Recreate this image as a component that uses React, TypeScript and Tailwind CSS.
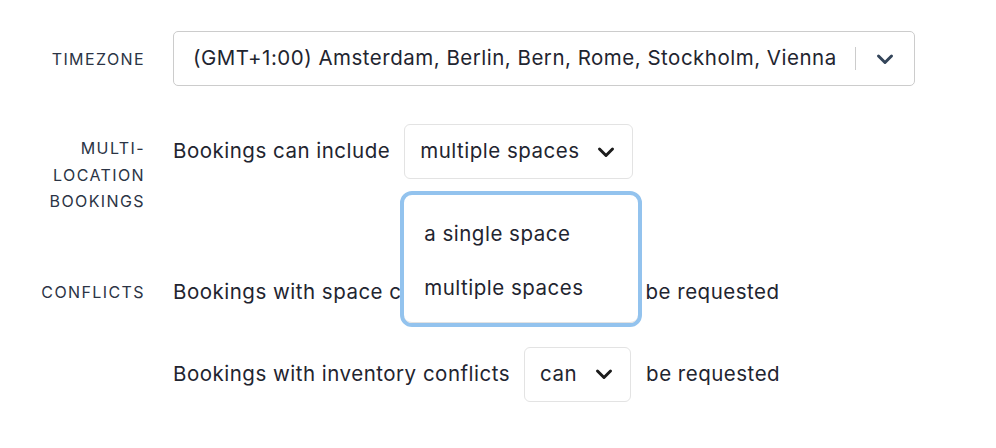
import React from "react";

function Chevron({ className }: { className?: string }) {
  return (
    <svg width="18" height="12" viewBox="0 0 18 12" className={className} fill="none">
      <polyline points="2.5,3 9,9.5 15.5,3" stroke="currentColor" strokeWidth="3" strokeLinecap="round" strokeLinejoin="round" />
    </svg>
  );
}

function Select({ value, width }: { value: string; width: string }) {
  return (
    <div className={`flex h-[55px] items-center justify-between rounded-md border border-[#e3e3e3] bg-white pl-[15px] pr-[17px] ${width}`}>
      <span>{value}</span>
      <Chevron className="text-[#1c1c1c]" />
    </div>
  );
}

export default function App() {
  return (
    <div className="min-h-[448px] w-[996px] bg-white text-[20.5px] tracking-[0.5px] text-[#1f2530]" style={{ fontFamily: "Inter, 'Noto Sans', sans-serif" }}>
      <div className="flex flex-col pt-[31px]">
        {/* timezone */}
        <div className="flex items-center">
          <div className="w-[145px] text-right text-[16px] tracking-[1.4px] text-[#2b3445]">TIMEZONE</div>
          <div className="ml-[28px] flex h-[55px] w-[742px] items-center rounded-[5px] border border-[#cccccc] pl-[19px]">
            <span className="flex-1">(GMT+1:00) Amsterdam, Berlin, Bern, Rome, Stockholm, Vienna</span>
            <div className="h-[23px] w-px bg-[#cccccc]" />
            <div className="flex w-[58px] justify-center">
              <Chevron className="text-[#34455a]" />
            </div>
          </div>
        </div>

        {/* multi-location */}
        <div className="mt-[38px] flex items-start">
          <div className="w-[145px] pt-[11px] text-right text-[16px] leading-[26.5px] tracking-[1.4px] text-[#2b3445]">
            MULTI-
            <br />
            LOCATION
            <br />
            BOOKINGS
          </div>
          <div className="ml-[28px] flex items-center">
            <span>Bookings can include</span>
            <div className="relative ml-[14px]">
              <Select value="multiple spaces" width="w-[229px]" />
              <div className="absolute left-[-4px] top-[67px] z-10 w-[242px] rounded-[12px] border-4 border-[#93c3ee] bg-white">
                <div className="rounded-[8px] border-b border-[#e2e2e2] pb-[7px] pt-[12px]">
                  <div className="flex h-[54px] items-center pl-[20px]">a single space</div>
                  <div className="flex h-[54px] items-center pl-[20px]">multiple spaces</div>
                </div>
              </div>
            </div>
          </div>
        </div>

        {/* conflicts */}
        <div className="mt-[50px] flex items-center">
          <div className="w-[145px] text-right text-[16px] tracking-[1.4px] text-[#2b3445]">CONFLICTS</div>
          <div className="ml-[28px] flex items-center">
            <span>Bookings with space conflicts</span>
            <div className="ml-[15px]">
              <Select value="cannot" width="w-[139px]" />
            </div>
            <span className="ml-[15px]">be requested</span>
          </div>
        </div>
        <div className="mt-[27px] flex items-center">
          <div className="w-[145px]" />
          <div className="ml-[28px] flex items-center">
            <span>Bookings with inventory conflicts</span>
            <div className="ml-[14px]">
              <Select value="can" width="w-[107px]" />
            </div>
            <span className="ml-[15px]">be requested</span>
          </div>
        </div>
      </div>
    </div>
  );
}
